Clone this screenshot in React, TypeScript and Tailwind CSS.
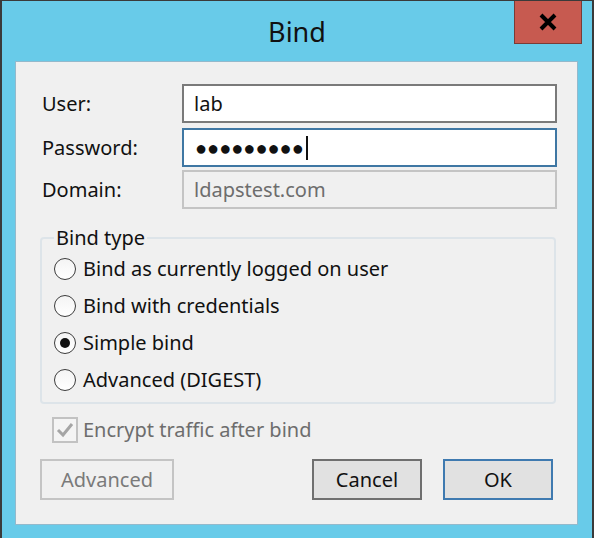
import React from "react";

const font = { fontFamily: '"Noto Sans", "Open Sans", sans-serif' };

function Radio({ label, checked }: { label: string; checked?: boolean }) {
  return (
    <div className="flex h-[37px] items-center">
      <div className="ml-[12px] flex h-[22px] w-[22px] items-center justify-center rounded-full border-[1.5px] border-[#3c3c3c] bg-gradient-to-b from-[#f4f4f4] to-white">
        {checked && <div className="h-[10px] w-[10px] rounded-full bg-[#111]" />}
      </div>
      <span className="ml-[7px] text-[20px] text-[#111]">{label}</span>
    </div>
  );
}

export default function App() {
  return (
    <div className="h-[538px] w-[610px] overflow-hidden bg-white" style={font}>
      <div className="flex h-[560px] w-[594px] flex-col border-l-2 border-r-2 border-t border-[#3a3a3a] bg-[#68cbe9]">
        <div className="relative flex h-[60px] shrink-0 items-center justify-center">
          <span className="mt-[2px] text-[27px] text-[#111]">Bind</span>
          <div className="absolute right-[10px] top-0 flex h-[43px] w-[68px] items-center justify-center border border-t-0 border-[#7a3b36] bg-[#c75a50]">
            <svg width="20" height="18" viewBox="0 0 20 18">
              <path d="M3 2 L17 16 M17 2 L3 16" stroke="#000" strokeWidth="4" strokeLinecap="butt" />
            </svg>
          </div>
        </div>
        <div className="ml-[13px] flex h-[464px] w-[563px] flex-col border border-[#93b9cc] bg-[#f0f0f0] pl-[26px] pr-[20px] pt-[22px]">
          <div className="flex h-[39px] items-center">
            <span className="w-[140px] text-[20px] text-[#111]">User:</span>
            <div className="flex h-[39px] flex-1 items-center border-2 border-[#7a7a7a] bg-white pl-[10px] text-[20px] text-[#111]">
              lab
            </div>
          </div>
          <div className="mt-[5px] flex h-[39px] items-center">
            <span className="w-[140px] text-[20px] text-[#111]">Password:</span>
            <div className="flex h-[39px] flex-1 items-center border-2 border-[#3f77a3] bg-white pl-[11px] text-[20px] text-[#111]">
              <span>●●●●●●●●●</span>
              <span className="ml-[2px] h-[24px] w-[2px] bg-[#111]" />
            </div>
          </div>
          <div className="mt-[3px] flex h-[39px] items-center">
            <span className="w-[140px] text-[20px] text-[#111]">Domain:</span>
            <div className="flex h-[39px] flex-1 items-center border-2 border-[#c4c4c4] bg-[#f0f0f0] pl-[10px] text-[20px] text-[#6d6d6d]">
              ldapstest.com
            </div>
          </div>

          <fieldset className="-ml-[2px] mr-[1px] mt-[17px] h-[178px] rounded-[4px] border-2 border-[#dde4e9] pb-[4px]">
            <legend className="ml-[12px] px-[2px] text-[20px] leading-[24px] text-[#111]">Bind type</legend>
            <div className="flex flex-col">
              <Radio label="Bind as currently logged on user" />
              <Radio label="Bind with credentials" />
              <Radio label="Simple bind" checked />
              <Radio label="Advanced (DIGEST)" />
            </div>
          </fieldset>

          <div className="mt-[12px] flex h-[27px] items-center">
            <div className="ml-[10px] flex h-[26px] w-[26px] items-center justify-center border-2 border-[#c2c2c2] bg-[#f4f4f4]">
              <svg width="18" height="16" viewBox="0 0 18 16">
                <path d="M2 8 L7 13 L16 2" fill="none" stroke="#a5a5a5" strokeWidth="3" />
              </svg>
            </div>
            <span className="ml-[5px] text-[20px] text-[#6d6d6d]">Encrypt traffic after bind</span>
          </div>

          <div className="mt-[16px] flex items-center">
            <div className="-ml-[2px] flex h-[41px] w-[134px] items-center justify-center border-2 border-[#c4c4c4] bg-[#f0f0f0] text-[20px] text-[#7a7a7a]">
              Advanced
            </div>
            <div className="ml-auto flex h-[41px] w-[110px] items-center justify-center border-2 border-[#6f6f6f] bg-[#e1e1e1] text-[20px] text-[#111]">
              Cancel
            </div>
            <div className="ml-[21px] mr-[4px] flex h-[41px] w-[110px] items-center justify-center border-2 border-[#3f7ab0] bg-[#e1e1e1] text-[20px] text-[#111]">
              OK
            </div>
          </div>
        </div>
      </div>
    </div>
  );
}
